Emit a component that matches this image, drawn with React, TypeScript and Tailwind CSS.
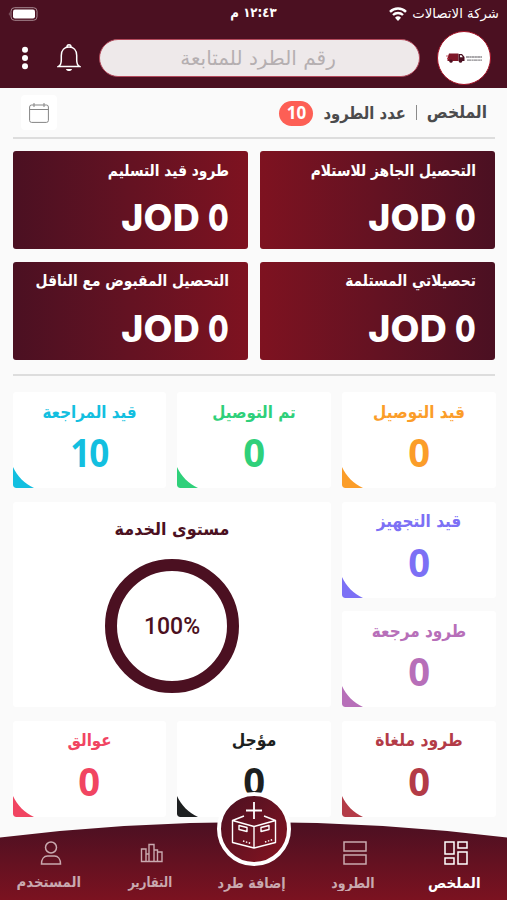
import type { ReactNode } from 'react'

const amounts = [
  { title: 'التحصيل الجاهز للاستلام', bg: 'bg-linear-to-l' },
  { title: 'طرود قيد التسليم', bg: 'bg-linear-to-r' },
  { title: 'تحصيلاتي المستلمة', bg: 'bg-linear-to-l' },
  { title: 'التحصيل المقبوض مع الناقل', bg: 'bg-linear-to-r' },
]

function AmountCard({ title, bg }: { title: string; bg: string }) {
  return (
    <div
      className={`${bg} h-[98px] rounded-[3px] from-[#4b1022] to-[#7e1220] pr-[18.5px] text-white`}
    >
      <div className="flex h-[38px] items-center">
        <span className="inline-block scale-y-[1.15] whitespace-nowrap text-[13.8px] font-bold">
          {title}
        </span>
      </div>
      <div
        dir="ltr"
        className="flex h-[58px] items-center justify-end gap-[8px] font-['Inter'] text-[37.5px] font-extrabold leading-none"
      >
        <span className="tracking-[0.2px]">JOD</span>
        <span className="inline-block w-[21px] origin-left scale-x-[0.8]">
          0
        </span>
      </div>
    </div>
  )
}

function StatCard({
  title,
  value,
  color,
  size = 'text-[15.3px]',
}: {
  title: string
  value: string
  color: string
  size?: string
}) {
  return (
    <div
      className={`relative flex flex-col items-center overflow-hidden rounded-[3px] bg-white ${color}`}
    >
      <div className="flex h-[40px] items-center">
        <span
          className={`${size} inline-block scale-y-[1.12] whitespace-nowrap font-bold`}
        >
          {title}
        </span>
      </div>
      <span
        className={`${value.length > 1 ? 'scale-x-[0.9] tracking-[-1px]' : 'scale-x-[0.98]'} -mt-px inline-block font-['Open_Sans'] text-[39px] font-bold leading-[42px]`}
      >
        {value}
      </span>
      <svg
        viewBox="0 0 21 21"
        className="absolute bottom-0 left-0 h-[21px] w-[21px]"
        fill="currentColor"
      >
        <path d="M0 0C4 9 12 17 21 21H3Q0 21 0 18Z" />
      </svg>
    </div>
  )
}

function NavItem({
  label,
  size,
  active,
  children,
}: {
  label: string
  size: string
  active?: boolean
  children?: ReactNode
}) {
  return (
    <div
      className={`flex w-[101.4px] flex-col items-center ${active ? 'text-white' : 'text-[#c9a9af]'}`}
    >
      <div className="flex h-[26px] items-center justify-center">{children}</div>
      <div className="mt-[5px] flex h-[24px] items-center pr-[4px]">
        <span className={`${size} inline-block whitespace-nowrap font-bold`}>
          {label}
        </span>
      </div>
    </div>
  )
}

function App() {
  return (
    <div
      dir="rtl"
      className="relative h-[900px] w-[507px] overflow-hidden bg-[#fafafa] font-['DejaVu_Sans',sans-serif]"
    >
      {/* Header */}
      <header className="h-[88px] bg-[#4b1021] text-white">
        <div className="grid h-[28px] grid-cols-3 items-center px-[8px]">
          <div className="flex items-center gap-[5px]">
            <span className="inline-block whitespace-nowrap text-[13.3px]">
              شركة الاتصالات
            </span>
            <svg viewBox="0 0 18 14" className="h-[14px] w-[18px]" fill="none">
              <path d="M1 4.8a11.5 11.5 0 0 1 16 0" stroke="currentColor" strokeWidth="2.5" />
              <path d="M4 8a7.3 7.3 0 0 1 10 0" stroke="currentColor" strokeWidth="2.4" />
              <path d="M9 14 6 10.7a4.4 4.4 0 0 1 6 0Z" fill="currentColor" />
            </svg>
          </div>
          <span className="scale-y-[1.12] text-center text-[11.8px] font-bold">
            ١٢:٤٣ م
          </span>
          <div className="flex justify-end">
            <svg viewBox="0 0 30 14" className="h-[14px] w-[30px]" fill="none">
              <rect x="3" y=".7" width="26" height="12.6" rx="3.5" stroke="#a68890" />
              <rect x="5" y="2.5" width="22" height="9" rx="2" fill="#fff" />
              <path d="M1.5 5Q0 7 1.5 9Z" fill="#a68890" />
            </svg>
          </div>
        </div>
        <div className="flex h-[60px] items-center pr-[16px]">
          <div className="flex h-[54px] w-[54px] shrink-0 items-center justify-center rounded-full border border-[#a51226] bg-white">
            <div dir="ltr" className="flex items-center gap-px">
              <svg viewBox="0 0 19 10" className="h-[10px] w-[19px]">
                <path d="M3 .5h9.5V8H1.5V5Z" fill="#7e1728" />
                <path d="M12.5 1H16l2.500 3v4h-6z" fill="#4b1021" />
                <path d="M0 3h3M1 5.5h2" stroke="#c0303f" strokeWidth=".8" />
                <path d="M14 2.2h1.5l1.300 2H14z" fill="#fff" />
                <circle cx="5" cy="8.2" r="1.6" fill="#4b1021" />
                <circle cx="14.5" cy="8.2" r="1.6" fill="#4b1021" />
              </svg>
              <svg viewBox="0 0 16 7" className="h-[7px] w-[16px]" stroke="#8d8a8e">
                <path d="M0 2h16" strokeWidth="1.4" strokeDasharray="3 .3 2 .3" />
                <path d="M1 5.2h15" strokeWidth="1.2" strokeDasharray="4 .4 2 .3" />
              </svg>
            </div>
          </div>
          <div className="mr-[17.5px] flex h-[38px] w-[321px] shrink-0 items-center justify-center rounded-full border border-[#b34a5c] bg-[#eee9ea] text-[#b5afb1]">
            <span className="inline-block whitespace-nowrap pr-[2px] text-[20px]">
              رقم الطرد للمتابعة
            </span>
          </div>
          <svg viewBox="0 0 24 30" className="mr-[18px] h-[30px] w-[24px] shrink-0" fill="none" stroke="#fff" strokeWidth="1.5">
            <path d="M1.5 23.5C4 22 4.3 20 4.3 17V12.5C4.3 7 7.5 4 12 4s7.7 3 7.7 8.5V17c0 3 .3 5 2.8 6.5Z" />
            <path d="M10 4c0-3 4-3 4 0" />
            <path d="M9 26h6c-.5 2.7-5.5 2.7-6 0Z" fill="#fff" stroke="none" />
          </svg>
          <svg viewBox="0 0 8 26" className="mr-[27.5px] h-[26px] w-[8px] shrink-0" fill="#fff">
            <circle cx="4" cy="4.7" r="3" />
            <circle cx="4" cy="13" r="3" />
            <circle cx="4" cy="21.3" r="3" />
          </svg>
        </div>
      </header>

      <main className="mr-[12.5px] w-[481.5px]">
        {/* Summary row */}
        <div className="flex h-[51px] items-center border-b-2 border-[#dddddd] text-[#4b4b4d]">
          <span className="mr-[7.5px] mt-[3px] inline-block scale-y-[1.1] whitespace-nowrap text-[15.5px] font-bold">
            الملخص
          </span>
          <div className="mx-[10px] h-[15px] w-px bg-[#8a8a8a]"></div>
          <span className="mt-[2px] inline-block scale-y-[1.15] whitespace-nowrap text-[14.8px] font-bold">
            عدد الطرود
          </span>
          <span className="mr-[10px] mt-px flex h-[25px] w-[34px] items-center justify-center rounded-full bg-[#fd5f55] font-['Open_Sans'] text-[17px] font-bold text-white">
            10
          </span>
          <div className="ml-[8px] mr-auto flex h-[35px] w-[36px] items-center justify-center rounded bg-white">
            <svg viewBox="0 0 20 20" className="h-[20px] w-[20px]" fill="none" stroke="#858585">
              <rect x=".6" y="2" width="18.8" height="17.4" rx="2" />
              <path d="M.6 6.5h18.8M5 0v4M15 0v4" />
            </svg>
          </div>
        </div>

        {/* Collection amounts */}
        <div className="mt-[12px] grid grid-cols-2 gap-x-[12.5px] gap-y-[12.5px]">
          {amounts.map((item) => (
            <AmountCard key={item.title} {...item} />
          ))}
        </div>
        <div className="mt-[14.5px] h-[2px] bg-[#dddddd]"></div>

        {/* Parcel status */}
        <div className="-mr-[1.5px] mt-[16px] grid w-[483px] grid-cols-[154px_154px_153px] grid-rows-[96px_96px_96px_96px] gap-x-[11px] gap-y-[13.5px]">
          <StatCard title="قيد التوصيل" value="0" color="text-[#fb9d29]" />
          <StatCard title="تم التوصيل" value="0" color="text-[#2fd07a]" size="text-[15.1px]" />
          <StatCard title="قيد المراجعة" value="10" color="text-[#13bfe0]" size="text-[15.1px]" />
          <StatCard title="قيد التجهيز" value="0" color="text-[#7c70f5]" />
          <div className="col-span-2 row-span-2 flex flex-col items-center rounded-[3px] bg-white text-[#4b1021]">
            <div className="mt-[14px] flex h-[28px] items-center">
              <span className="inline-block scale-y-[1.08] whitespace-nowrap text-[16px] font-bold">
                مستوى الخدمة
              </span>
            </div>
            <div
              dir="ltr"
              className="mt-[15px] flex h-[134px] w-[134px] items-center justify-center rounded-full border-[12px] border-[#4b1021] pt-[4px] font-['Roboto'] text-[23px] font-medium"
            >
              100%
            </div>
          </div>
          <StatCard title="طرود مرجعة" value="0" color="text-[#b76fb9]" />
          <StatCard title="طرود ملغاة" value="0" color="text-[#b33b47]" size="text-[15.6px]" />
          <StatCard title="مؤجل" value="0" color="text-[#1d1f20]" size="text-[15.6px]" />
          <StatCard title="عوالق" value="0" color="text-[#f14562]" size="text-[15.1px]" />
        </div>
      </main>

      {/* Bottom navigation */}
      <nav className="absolute bottom-0 left-0 h-[78px] w-[507px]">
        <svg viewBox="0 0 507 78" className="absolute inset-0 h-[78px] w-[507px]">
          <defs>
            <linearGradient id="navFill" x1="0" y1="0" x2="0" y2="1">
              <stop offset="0" stopColor="#4b1022" />
              <stop offset="1" stopColor="#7b1220" />
            </linearGradient>
          </defs>
          <path d="M0 15.5Q253.5 -15.5 507 15.5V78H0Z" fill="url(#navFill)" />
        </svg>
        <div className="relative flex h-full pt-[18px]">
          <NavItem label="الملخص" size="scale-y-[1.08] text-[13.5px]" active>
            <svg viewBox="0 0 24 24" className="h-[24px] w-[24px]" fill="none" stroke="currentColor" strokeWidth="1.5">
              <path d="M1 1h9v12H1zM14 1h9v6h-9zM14 11h9v12h-9zM1 17h9v6H1z" />
            </svg>
          </NavItem>
          <NavItem label="الطرود" size="scale-y-[1.15] text-[12.6px]">
            <svg viewBox="0 0 24 24" className="h-[24px] w-[24px]" fill="none" stroke="currentColor" strokeWidth="1.5">
              <path d="M1 1h22v9H1zM1 14h22v9H1z" />
            </svg>
          </NavItem>
          <NavItem label="إضافة طرد" size="scale-y-[1.15] text-[12.7px]" />
          <NavItem label="التقارير" size="scale-y-[1.22] text-[11.6px]">
            <svg viewBox="0 0 24 20" className="h-[20px] w-[24px]" fill="none" stroke="currentColor" strokeWidth="1.4">
              <path d="M1.500 6H6v12.500H1.500zM9 1.500h5v17H9zM17.500 9H22v9.500h-4.500zM6 11h3M14 7h3.500v11.500M6 18.500h12" />
            </svg>
          </NavItem>
          <NavItem label="المستخدم" size="scale-y-[1.1] text-[13.3px]">
            <svg viewBox="0 0 22 24" className="h-[24px] w-[22px]" fill="none" stroke="currentColor" strokeWidth="1.5">
              <circle cx="11" cy="6.5" r="5.5" />
              <path d="M1.500 23c0-5 2.500-8 6-8h7c3.500 0 6 3 6 8Z" />
            </svg>
          </NavItem>
        </div>
        <div className="absolute left-[217px] top-[-30px] flex h-[74px] w-[74px] items-center justify-center rounded-full border-[4px] border-white bg-linear-to-br from-[#4b1021] to-[#86121f] pb-[8px]">
          <svg viewBox="0 0 46 47" className="h-[47px] w-[46px] shrink-0" fill="none" stroke="#fff" strokeWidth="1.4" strokeLinejoin="round">
            <path d="M23 0v17M15 8.500h16" strokeWidth="1.8" />
            <path d="M13 14 1.500 18.500v22L23 46l21.500-5.500v-22L33 14M1.500 18.500 23 24.500l21.500-6M23 24.500V46" />
            <path d="m8 23.500 8 2v4l-8-2zM38 23.500l-8 2v4l8-2z" />
            <path d="m12 39 8 2.500M34 40l8-2.500" strokeDasharray="1.5 1.5" />
          </svg>
        </div>
      </nav>
    </div>
  )
}

export default App
